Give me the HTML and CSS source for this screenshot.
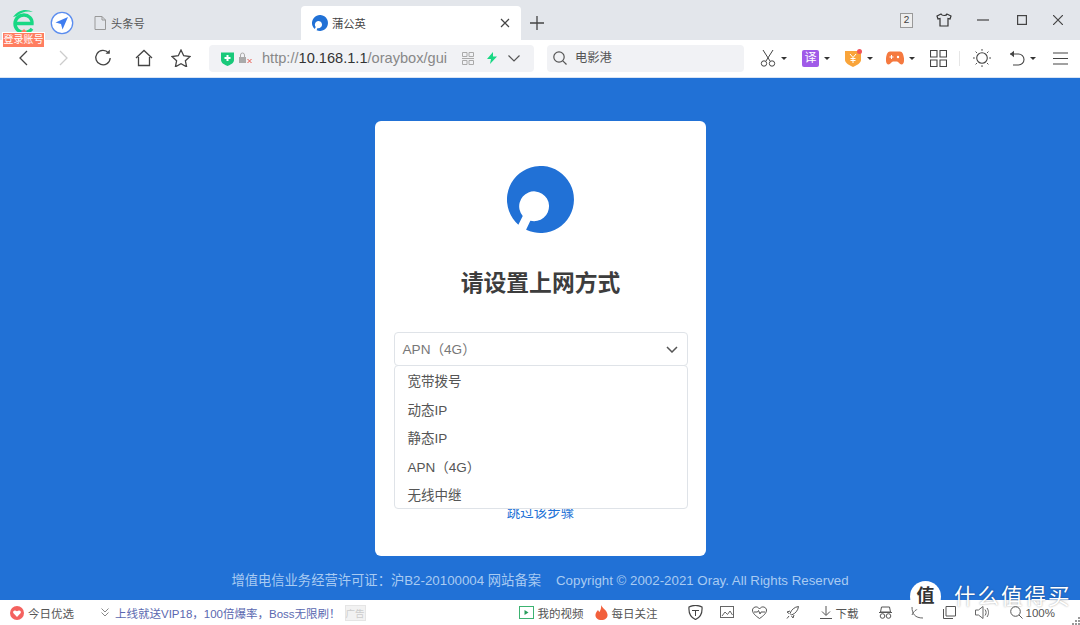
FILE: index.html
```html
<!DOCTYPE html>
<html>
	<head>
		<meta charset="UTF-8">
		<title>蒲公英</title>
		<link rel="stylesheet" href="styles.css">
	</head>
	<body>
		<div class="browser">
			<div class="tabbar">
				<div class="brand">
					<svg class="brand-e" width="26" height="28" viewBox="0 0 26 28"><path d="M4 15.500h17c.3-5-3.500-8.500-8-8.500-5 0-9 3.800-9 8.800 0 5 4 8.700 9 8.700 3.500 0 6-1.300 8-3.800" fill="none" stroke="#19d884" stroke-width="3.400"/><path d="M2 9C7 2 15 0 22 4c-6-1.500-12 0-16 4z" fill="#19d884"/></svg>
					<span class="login-tag">登录账号</span>
				</div>
				<svg class="nav-ball" width="24" height="24" viewBox="0 0 24 24"><circle cx="12" cy="12" r="10.700" fill="#fff" stroke="#5b8def" stroke-width="1.300"/><path d="M18 6 5.500 11.500l5.500 1.500 1.500 5.500z" fill="#3f7df0"/></svg>
				<div class="tab">
					<svg width="12" height="14" viewBox="0 0 12 14"><path d="M1 .5h7l3.500 3.500v9.500H1zM8 .5V4h3.500" fill="none" stroke="#999"/></svg>
					<span>头条号</span>
				</div>
				<div class="tab tab-on">
					<svg width="16" height="16" viewBox="0 0 66 66"><use href="#pgy"/></svg>
					<span>蒲公英</span>
					<svg class="tab-x" width="10" height="10" viewBox="0 0 10 10"><path d="M1 1l8 8M9 1 1 9" stroke="#444" stroke-width="1.200"/></svg>
				</div>
				<svg class="tab-add" width="14" height="14" viewBox="0 0 14 14"><path d="M7 0v14M0 7h14" stroke="#444" stroke-width="1.300"/></svg>
				<div class="win-btns">
					<span class="win-num">2</span>
					<svg width="16" height="14" viewBox="0 0 16 14"><path d="M5 1 1 3l1 3 2-.5V13h8V5.500l2 .5 1-3-4-2c-.5 2-5 2-6 0z" fill="none" stroke="#333" stroke-width="1.200"/></svg>
					<svg width="12" height="12" viewBox="0 0 12 12"><path d="M0 6h12" stroke="#444" stroke-width="1.200"/></svg>
					<svg width="10" height="10" viewBox="0 0 10 10"><rect x=".6" y=".6" width="8.800" height="8.800" fill="none" stroke="#444" stroke-width="1.200"/></svg>
					<svg width="10" height="10" viewBox="0 0 10 10"><path d="M0 0l10 10M10 0 0 10" stroke="#444" stroke-width="1.200"/></svg>
				</div>
			</div>

			<div class="toolbar">
				<div class="nav-icons">
					<svg width="12" height="16" viewBox="0 0 12 16"><path d="M10 1 3 8l7 7" fill="none" stroke="#444" stroke-width="1.300"/></svg>
					<svg width="12" height="16" viewBox="0 0 12 16"><path d="M2 1l7 7-7 7" fill="none" stroke="#ccc" stroke-width="1.300"/></svg>
					<svg width="18" height="18" viewBox="0 0 18 18"><path d="M14.500 4A7.200 7.200 0 1 0 16.200 9" fill="none" stroke="#444" stroke-width="1.300"/><path d="M11.500 4.800h4.300V.8z" fill="#444"/></svg>
					<svg width="18" height="18" viewBox="0 0 18 18"><path d="M1 9l8-7.500L17 9M3.500 8v8.500h11V8" fill="none" stroke="#444" stroke-width="1.300"/></svg>
					<svg width="20" height="18" viewBox="0 0 20 18"><path d="M10 1l2.700 5.700 6.300.8-4.600 4.300 1.200 6L10 14.800l-5.600 3 1.200-6L1 7.500l6.300-.8z" fill="none" stroke="#444" stroke-width="1.300"/></svg>
				</div>
				<div class="addr">
					<svg width="13" height="15" viewBox="0 0 13 15"><path d="M0 1.500h13V9c0 3-3.500 4.800-6.500 6C3.500 13.800 0 12 0 9z" fill="#19c97a"/><path d="M6.500 4v6M3.500 7h6" stroke="#fff" stroke-width="2"/></svg>
					<svg class="lock" width="14" height="13" viewBox="0 0 14 13"><rect x="0" y="5" width="7" height="6" fill="#aaa"/><path d="M1.500 5V3a2 2 0 0 1 4 0v2" fill="none" stroke="#aaa"/><path d="M8.500 7l4 4M12.500 7l-4 4" stroke="#e8594f"/></svg>
					<span class="url"><span class="url-dim">http://</span>10.168.1.1<span class="url-dim">/oraybox/gui</span></span>
					<svg class="qr" width="12" height="13" viewBox="0 0 12 13"><path d="M.5.500h4.500v4h-4.500zM7 .5h4.500v4H7zM.5 8.500h4.500v4h-4.500zM7 8.500h4.500v4H7zM0 6.500h12" fill="none" stroke="#aaa"/></svg>
					<svg class="bolt" width="10" height="12" viewBox="0 0 10 12"><path d="M6 0 0 7h4l-1 5 7-7.500H6z" fill="#19d884"/></svg>
					<svg class="addr-down" width="12" height="7" viewBox="0 0 12 7"><path d="M.5.500 6 6 11.500.5" fill="none" stroke="#555" stroke-width="1.200"/></svg>
				</div>
				<div class="search">
					<svg width="14" height="14" viewBox="0 0 14 14"><circle cx="6" cy="6" r="5.200" fill="none" stroke="#555" stroke-width="1.200"/><path d="M9.800 9.800 13.500 13.500" stroke="#555" stroke-width="1.200"/></svg>
					<span>电影港</span>
				</div>
				<div class="tools">
					<span class="tool"><svg width="16" height="17" viewBox="0 0 16 17"><path d="M3 0l7 11M13 0 6 11" stroke="#444" fill="none"/><circle cx="4" cy="13.500" r="2.700" fill="none" stroke="#444"/><circle cx="12" cy="13.500" r="2.700" fill="none" stroke="#444"/></svg><i class="caret"></i></span>
					<span class="tool"><span class="yi">译</span><i class="caret"></i></span>
					<span class="tool"><svg width="17" height="18" viewBox="0 0 17 18"><path d="M0 2h16v9c0 3-4 5-8 7-4-2-8-4-8-7z" fill="#f9a43a"/><path d="M5 5l3 3.500L11 5M8 8.500V14M5.500 9.500h5M5.500 11.500h5" stroke="#fff" fill="none"/><circle cx="14.500" cy="2.500" r="2.500" fill="#f0545a"/></svg><i class="caret"></i></span>
					<span class="tool tool-game"><svg width="18" height="14" viewBox="0 0 18 14"><path d="M4 .5h10c2.500 0 3.500 3 4 7 .3 3-.5 6-2.500 6-2 0-3-3-4.500-3H7c-1.500 0-2.500 3-4.500 3C.5 13.500-.3 10.500 0 7.500.5 3.500 1.500.5 4 .5z" fill="#f5793f"/><path d="M3.500 6h4M5.500 4v4" stroke="#fff"/><circle cx="12" cy="6" r="1.200" fill="#fff"/></svg><i class="caret"></i></span>
					<svg width="17" height="17" viewBox="0 0 17 17"><path d="M.5.500h6.500v6.500H.5zM10 .5h6.500v6.500H10zM.5 10h6.500v6.500H.5zM10 10h6.500v6.500H10z" fill="none" stroke="#444" stroke-width="1.100"/></svg>
					<i class="tool-sep"></i>
					<svg class="tool-sun" width="18" height="18" viewBox="0 0 18 18"><circle cx="9" cy="9" r="5.300" fill="none" stroke="#444" stroke-width="1.100"/><path d="M9 0v1.800M9 16.200V18M0 9h1.800M16.200 9H18M2.600 2.600l1.300 1.300M14.100 14.100l1.300 1.300M2.600 15.400l1.300-1.300M14.100 3.900l1.300-1.300" stroke="#444"/></svg>
					<span class="tool tool-undo"><svg width="16" height="16" viewBox="0 0 16 16"><path d="M1 4h8.500a5.500 5.500 0 0 1 0 11H4" fill="none" stroke="#444" stroke-width="1.100"/><path d="M5 .8 1 4l4 3.200z" fill="#444"/></svg><i class="caret"></i></span>
					<svg class="tool-menu" width="15" height="13" viewBox="0 0 15 13"><path d="M0 1h15M0 6.500h15M0 12h15" stroke="#444" stroke-width="1.100"/></svg>
				</div>
			</div>

			<div class="main">
				<div class="card">
					<svg class="logo" width="67" height="67" viewBox="0 0 66 66"><use href="#pgy"/></svg>
					<h1 class="title">请设置上网方式</h1>
					<div class="select-box">
						<div class="select">
							<span>APN（4G）</span>
							<svg width="12" height="7" viewBox="0 0 12 7"><path d="M1 1l5 5 5-5" fill="none" stroke="#555" stroke-width="1.500"/></svg>
						</div>
						<ul class="options">
							<li>宽带拨号</li>
							<li>动态IP</li>
							<li>静态IP</li>
							<li>APN（4G）</li>
							<li>无线中继</li>
						</ul>
					</div>
					<a class="skip">跳过该步骤</a>
				</div>
				<div class="foot">
					<span>增值电信业务经营许可证：沪B2-20100004 网站备案</span>
					<span>Copyright © 2002-2021 Oray. All Rights Reserved</span>
				</div>
			</div>

			<div class="statusbar">
				<svg width="14" height="14" viewBox="0 0 14 14"><circle cx="7" cy="7" r="7" fill="#f4625f"/><path d="M7 11 3.500 7.300C2 5.500 4.500 3.200 7 5.300c2.500-2.100 5 .2 3.500 2z" fill="#fff"/></svg>
				<span class="today">今日优选</span>
				<svg class="chev" width="8" height="9" viewBox="0 0 8 9"><path d="M.5.500 4 4 7.500.5M.5 4.500 4 8l3.500-3.500" fill="none" stroke="#888"/></svg>
				<span class="promo">上线就送VIP18，100倍爆率，Boss无限刷！</span>
				<span class="ad">广告</span>
				<div class="status-right">
					<span class="st-item"><svg width="15" height="13" viewBox="0 0 15 13"><rect x=".5" y=".5" width="14" height="12" fill="none" stroke="#3cb371"/><path d="M5.500 4v5l4-2.500z" fill="#2a9d5c"/></svg>我的视频</span>
					<span class="st-item"><svg width="13" height="15" viewBox="0 0 13 15"><path d="M6 0c1 3 6 5 6.500 9.500C13 13 10 15 6.500 15S0 13 .5 9.500C.8 7.500 2 6.500 3 5c.5 1 1 1.500 1.500 2C5.500 5 6.500 3 6 0z" fill="#f2603c"/></svg>每日关注</span>
					<svg width="15" height="15" viewBox="0 0 15 15"><path d="M1 2c4-2 9-2 13 0 .5 6-1.500 10.500-6.500 12.500C2.500 12.500.5 8 1 2z" fill="none" stroke="#444" stroke-width="1.200"/><path d="M4 5.500h7M7.500 5.500V11" stroke="#444"/></svg>
					<svg width="14" height="14" viewBox="0 0 14 14"><rect x=".5" y=".5" width="13" height="11" fill="none" stroke="#666"/><path d="M2 10l3-4 2.500 2.500L10 5l2.500 4" fill="none" stroke="#666"/></svg>
					<svg width="15" height="13" viewBox="0 0 15 13"><path d="M7.500 12.500C3 9.500.5 7 .5 4 .5 1.500 5-1 7.500 3 10-1 14.500 1.500 14.500 4c0 3-2.500 5.500-7 8.500z" fill="none" stroke="#555"/><path d="M2 6h3.500l1-1.500L8 8l1-2h4" fill="none" stroke="#555"/></svg>
					<svg width="13" height="13" viewBox="0 0 13 13"><path d="M12.500.5c-4 .5-7 3-8.500 7l1.500 1.500c4-1.500 6.500-4.500 7-8.500zM4 5 1 6l2 1.500M8 9l-1 3-1.500-2M3 10l-2 2.500" fill="none" stroke="#555"/></svg>
					<span class="st-item"><svg width="12" height="13" viewBox="0 0 12 13"><path d="M6 0v9M2 5.500 6 9.500l4-4M0 12.500h12" fill="none" stroke="#555"/></svg>下载</span>
					<svg width="13" height="13" viewBox="0 0 13 13"><path d="M2.500 1h8l1 5h-10zM0 6.500h13" fill="none" stroke="#555"/><circle cx="3.500" cy="10" r="2.300" fill="none" stroke="#555"/><circle cx="9.500" cy="10" r="2.300" fill="none" stroke="#555"/></svg>
					<svg width="13" height="13" viewBox="0 0 13 13"><path d="M1 1c0 7 3 11 11 11M1 9c2-5 6-7 11-6" fill="none" stroke="#666"/></svg>
					<svg width="13" height="13" viewBox="0 0 13 13"><path d="M3 .5h9.500V10H3zM.5 3v9.500H10" fill="none" stroke="#555"/></svg>
					<svg width="14" height="13" viewBox="0 0 14 13"><path d="M.5 4h3L8 .5v12L3.500 9h-3zM10 3.500c1.500 2 1.500 4 0 6M12 2c2 3 2 6 0 9" fill="none" stroke="#666"/></svg>
					<span class="st-item st-zoom"><svg width="13" height="13" viewBox="0 0 13 13"><circle cx="5.500" cy="5.500" r="4.800" fill="none" stroke="#555"/><path d="M9 9l3.500 3.500" stroke="#555"/></svg>100%</span>
				</div>
			</div>

			<div class="watermark">
				<span class="wm-badge">值</span>
				<span class="wm-text">什么值得买</span>
			</div>
			<svg class="grip" width="8" height="8" viewBox="0 0 8 8"><path d="M6 0h2v2H6zM3 3h2v2H3zM6 3h2v2H6zM0 6h2v2H0zM3 6h2v2H3zM6 6h2v2H6z" fill="#999"/></svg>
		</div>

		<svg width="0" height="0" class="defs">
			<symbol id="pgy" viewBox="0 0 66 66">
				<path fill="#2171d6" d="M11.200 57.800A33 33 0 1 1 18.800 62.800L23 53.900A14.700 14.700 0 1 0 15.500 49.200Z"/>
			</symbol>
		</svg>
	</body>
</html>
```

FILE: styles.css
```css
*{
	box-sizing: border-box;
	margin: 0;
	padding: 0;
}
html,body{
	width: 1080px;
	height: 625px;
	overflow: hidden;
}
body{
	font-family: "Liberation Sans", "Noto Sans CJK SC", sans-serif;
	background: #fff;
	color: #444;
}
.defs{
	position: absolute;
}
.browser{
	position: relative;
	display: flex;
	flex-direction: column;
	width: 1080px;
	height: 625px;
}

/* tab strip */
.tabbar{
	display: flex;
	align-items: flex-end;
	height: 40px;
	background: #e3e6eb;
	padding-left: 12px;
}
.brand{
	position: relative;
	width: 26px;
	height: 40px;
}
.brand-e{
	position: absolute;
	top: 8px;
	left: -1px;
}
.login-tag{
	position: absolute;
	top: 32px;
	left: -10px;
	width: 43px;
	height: 16px;
	background: #ff7e61;
	border: 1px solid #fff;
	color: #fff;
	font-size: 10px;
	line-height: 14px;
	text-align: center;
	white-space: nowrap;
	z-index: 2;
}
.login-tag::before{
	content: "";
	position: absolute;
	top: -4px;
	left: 18px;
	border: 3px solid transparent;
	border-top: 0;
	border-bottom: 3px solid #ff7e61;
}
.nav-ball{
	margin: 0 0 5px 12px;
}
.tab{
	display: flex;
	align-items: center;
	gap: 5px;
	height: 34px;
	font-size: 11.300px;
	color: #555;
	padding-left: 20px;
	width: 227px;
}
.tab-on{
	width: 220px;
	background: #fff;
	border-radius: 4px 4px 0 0;
	padding-left: 11px;
	gap: 4px;
	color: #444;
}
.tab-on span{
	flex: 1;
}
.tab-x{
	margin-right: 11px;
}
.tab-add{
	margin: 0 0 10px 9px;
}
.win-btns{
	display: flex;
	align-items: center;
	height: 40px;
	margin-left: auto;
	padding-right: 17px;
}
.win-btns svg:nth-child(2){
	margin-left: 23px;
}
.win-btns svg:nth-child(3){
	margin-left: 25px;
}
.win-btns svg:nth-child(4){
	margin-left: 28px;
}
.win-btns svg:nth-child(5){
	margin-left: 26px;
}
.win-num{
	width: 13px;
	height: 15px;
	border: 1px solid #999;
	background: #eee;
	font-family: "Liberation Mono", monospace;
	font-size: 10px;
	line-height: 13px;
	text-align: center;
}

/* toolbar */
.toolbar{
	display: flex;
	align-items: center;
	height: 38px;
	background: #fff;
	border-bottom: 1px solid #d8e4f5;
	padding-bottom: 1px;
}
.nav-icons{
	display: flex;
	align-items: center;
	width: 209px;
	padding-left: 17px;
}
.nav-icons svg:nth-child(2){
	margin-left: 29px;
}
.nav-icons svg:nth-child(3){
	margin-left: 24px;
}
.nav-icons svg:nth-child(4){
	margin-left: 23px;
}
.nav-icons svg:nth-child(5){
	margin-left: 18px;
}
.addr{
	display: flex;
	align-items: center;
	width: 325px;
	height: 27px;
	background: #f1f2f5;
	border-radius: 4px;
	padding-left: 12px;
	gap: 4px;
}
.lock{
	margin-left: 1px;
}
.url{
	margin-left: 5px;
	font-size: 14.600px;
	color: #333;
	width: 190px;
	white-space: nowrap;
}
.url-dim{
	color: #888;
}
.qr{
	margin-left: 6px;
}
.bolt{
	margin-left: 9px;
}
.addr-down{
	margin-left: 7px;
}
.search{
	display: flex;
	align-items: center;
	gap: 8px;
	width: 197px;
	height: 27px;
	margin-left: 13px;
	padding-left: 6px;
	background: #f1f2f5;
	border-radius: 4px;
	font-size: 12.300px;
	color: #555;
}
.search span{
	margin-bottom: 2px;
}
.tools{
	display: flex;
	align-items: center;
	gap: 15px;
	margin-left: 16px;
}
.tool{
	display: flex;
	align-items: center;
	gap: 5px;
}
.caret{
	width: 0;
	height: 0;
	border: 3px solid transparent;
	border-top: 3px solid #333;
	border-bottom: 0;
}
.yi{
	width: 17px;
	height: 17px;
	background: #a05ae8;
	border-radius: 2px;
	color: #fff;
	font-size: 12px;
	line-height: 17px;
	text-align: center;
}
.tool-game{
	margin-left: -2px;
}
.tool-sep{
	width: 1px;
	height: 15px;
	background: #e6e6e6;
	margin-left: -3px;
}
.tool-sun{
	margin-left: -2px;
}
.tool-undo{
	margin-left: 3px;
}
.tool-menu{
	margin-left: 2px;
}

/* page */
.main{
	flex: 1;
	display: flex;
	flex-direction: column;
	align-items: center;
	background: #2171d6;
	padding-top: 43px;
}
.card{
	display: flex;
	flex-direction: column;
	align-items: center;
	width: 331px;
	height: 435px;
	margin-left: 1px;
	background: #fff;
	border-radius: 6px;
	padding-top: 45px;
}
.logo{
	display: block;
}
.title{
	margin-top: 32px;
	font-size: 22.800px;
	line-height: 36px;
	font-weight: 700;
	color: #3d3d3d;
}
.select-box{
	position: relative;
	width: 294px;
	margin-top: 31px;
}
.select{
	display: flex;
	align-items: center;
	justify-content: space-between;
	height: 34px;
	padding: 0 9px 2px 8px;
	border: 1px solid #dfe3e8;
	border-radius: 4px;
	font-size: 13.600px;
	color: #777;
}
.select svg{
	margin-top: 3px;
}
.options{
	position: absolute;
	top: 33px;
	left: 0;
	width: 100%;
	height: 144px;
	list-style: none;
	background: #fff;
	border: 1px solid #dfe3e8;
	border-radius: 4px;
	padding-top: 2px;
	z-index: 2;
}
.options li{
	height: 28.500px;
	padding-left: 13px;
	font-size: 13.500px;
	line-height: 28px;
	color: #555;
}
.skip{
	margin-top: 138px;
	font-size: 13.500px;
	line-height: 18px;
	color: #2171d6;
}
.foot{
	display: flex;
	gap: 15px;
	margin-top: 17px;
	font-size: 13.300px;
	line-height: 16px;
	color: #a9cbf2;
	white-space: nowrap;
}

/* status bar */
.statusbar{
	display: flex;
	align-items: center;
	height: 25px;
	background: #fff;
	padding-left: 10px;
	font-size: 11.500px;
	color: #555;
	white-space: nowrap;
}
.today{
	margin-left: 4px;
}
.chev{
	margin-left: 27px;
}
.promo{
	margin-left: 6px;
	color: #5a68b0;
}
.ad{
	margin-left: 4px;
	font-size: 9.500px;
	color: #ccc;
	background: #f2f2f2;
	border: 1px solid #e5e5e5;
}
.status-right{
	display: flex;
	align-items: center;
	margin-left: auto;
	padding-right: 25px;
}
.status-right > :nth-child(2){
	margin-left: 11px;
}
.status-right > :nth-child(3){
	margin-left: 30px;
}
.status-right > :nth-child(4){
	margin-left: 17px;
}
.status-right > :nth-child(5){
	margin-left: 18px;
}
.status-right > :nth-child(6){
	margin-left: 19px;
}
.status-right > :nth-child(7){
	margin-left: 21px;
}
.status-right > :nth-child(8){
	margin-left: 20px;
}
.status-right > :nth-child(9),
.status-right > :nth-child(10),
.status-right > :nth-child(11){
	margin-left: 19px;
}
.status-right > :nth-child(12){
	margin-left: 21px;
}
.st-item{
	display: flex;
	align-items: center;
	gap: 4px;
}
.st-zoom{
	gap: 3px;
}

.watermark{
	position: absolute;
	left: 910px;
	top: 581px;
	display: flex;
	align-items: flex-start;
	gap: 13px;
}
.wm-badge{
	width: 31px;
	height: 31px;
	background: #fff;
	border-radius: 50%;
	color: #333;
	font-size: 18px;
	font-weight: 700;
	line-height: 31px;
	text-align: center;
}
.wm-text{
	margin-top: 3px;
	font-size: 21.500px;
	line-height: 26px;
	letter-spacing: 2px;
	color: #fff;
	text-shadow: 0 0 2px rgba(0,0,0,0.4);
	white-space: nowrap;
}
.grip{
	position: absolute;
	right: 0;
	bottom: 0;
}
```
